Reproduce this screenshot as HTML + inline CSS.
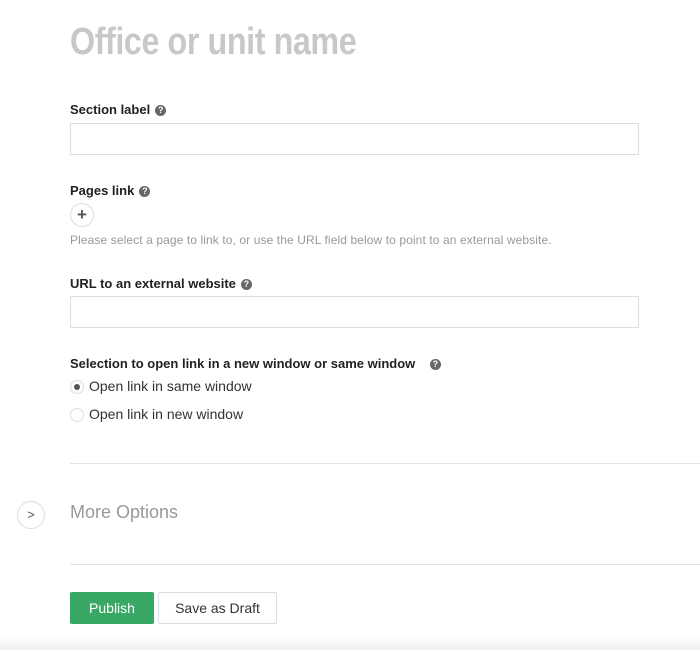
<!DOCTYPE html>
<html><head><meta charset="utf-8"><style>
*{margin:0;padding:0;box-sizing:border-box}
body{width:700px;height:650px;background:#fff;font-family:"Liberation Sans",sans-serif;position:relative;overflow:hidden;color:#333}
.a{position:absolute}
h1{position:absolute;left:70px;top:21px;font-size:38px;font-weight:bold;color:#c8c8c8;transform:scaleX(0.85);transform-origin:left top;white-space:nowrap;letter-spacing:-0.5px}
.lbl{font-size:13px;font-weight:bold;color:#222}
.q{display:inline-block;width:11px;height:11px;border-radius:50%;background:#666;color:#fff;font-size:9px;line-height:11px;text-align:center;vertical-align:1px;margin-left:5px;font-weight:bold}
.inp{position:absolute;left:70px;width:569px;height:32px;border:1px solid #ddd;background:#fff}
.radio{position:absolute;left:70px;width:14px;height:14px;border-radius:50%;border:1px solid #ddd}
.rt{font-size:14px;color:#333}
.hr{position:absolute;left:70px;right:0;height:1px;background:#e4e4e4}
</style></head><body>
<h1>Office or unit name</h1>
<div class="a lbl" style="left:70px;top:102px">Section label<span class="q">?</span></div>
<div class="inp" style="top:123px"></div>
<div class="a lbl" style="left:70px;top:183px">Pages link<span class="q">?</span></div>
<div class="a" style="left:70px;top:203px;width:24px;height:24px;border-radius:50%;border:1px solid #ddd;text-align:center;line-height:21px;font-size:17px;font-weight:bold;color:#555">+</div>
<div class="a" style="left:70px;top:233px;font-size:12px;color:#999;letter-spacing:0.1px">Please select a page to link to, or use the URL field below to point to an external website.</div>
<div class="a lbl" style="left:70px;top:276px">URL to an external website<span class="q">?</span></div>
<div class="inp" style="top:296px"></div>
<div class="a lbl" style="left:70px;top:356px">Selection to open link in a new window or same window <span class="q" style="margin-left:11px">?</span></div>
<div class="radio" style="top:380px"><div style="position:absolute;left:3px;top:3px;width:6px;height:6px;border-radius:50%;background:#555"></div></div>
<div class="a rt" style="left:89px;top:378px">Open link in same window</div>
<div class="radio" style="top:408px"></div>
<div class="a rt" style="left:89px;top:406px">Open link in new window</div>
<div class="hr" style="top:463px"></div>
<div class="a" style="left:17px;top:501px;width:28px;height:28px;border-radius:50%;border:1px solid #ddd;text-align:center;line-height:25px;font-size:13px;color:#555">&gt;</div>
<div class="a" style="left:70px;top:502px;font-size:18px;color:#999">More Options</div>
<div class="hr" style="top:564px"></div>
<div class="a" style="left:70px;top:592px;width:84px;height:32px;background:#3aa865;border-radius:2px;color:#fff;font-size:14px;text-align:center;line-height:32px">Publish</div>
<div class="a" style="left:158px;top:592px;width:119px;height:32px;border:1px solid #ddd;border-radius:2px;color:#333;font-size:14px;text-align:center;line-height:30px">Save as Draft</div>
<div class="a" style="left:0;top:636px;width:700px;height:14px;background:linear-gradient(#fff,#f1f1f1)"></div>
</body></html>
